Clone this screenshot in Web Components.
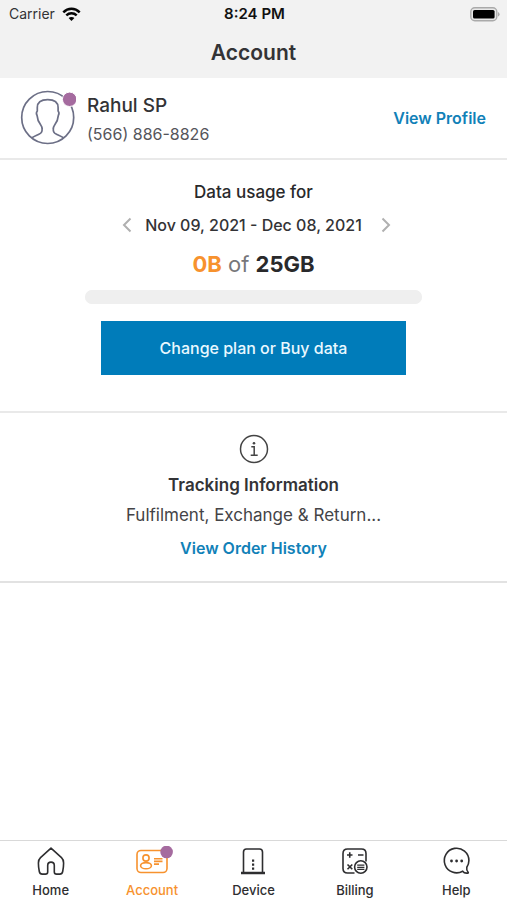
<!DOCTYPE html>
<html lang="en">
<head>
<meta charset="utf-8">
<meta name="viewport" content="width=device-width, initial-scale=1">
<title>Account</title>
<style>
  html, body { margin: 0; height: 100%; }
  body {
    --ink: #333336; --blue: #007cba; --link: #1181b8; --orange: #f7922e;
    --badge: #a56b9f; --bar: #f2f2f2; --line: #e2e2e2; --line-soft: #e9e9e9;
    font-family: Inter, "Liberation Sans", sans-serif;
    color: var(--ink); background: #fff;
  }
</style>
</head>
<body>
<account-app></account-app>
<script>
const define = (name, html) => {
  const template = document.createElement('template');
  template.innerHTML = html;
  customElements.define(name, class extends HTMLElement {
    constructor() {
      super();
      this.attachShadow({ mode: 'open' }).append(template.content.cloneNode(true));
    }
  });
};

define('status-bar', `
  <style>
    :host { display: grid; grid-template-columns: 1fr auto 1fr; align-items: center;
      height: 28px; padding: 0 7px 0 9px; background: var(--bar); font-size: 14px; line-height: 20px; }
    .left { display: flex; align-items: center; gap: 7px; }
    .time { font-size: 15px; font-weight: 600; color: #111; }
    .battery { justify-self: end; }
    svg { display: block; }
  </style>
  <span class="left">Carrier
    <svg width="19" height="15" viewBox="0 0 19 15" fill="none" stroke="#050505" stroke-width="2.5" aria-hidden="true">
      <path d="M1.3 5.3C6 .7 13 .7 17.7 5.3"/><path d="M4.3 8.4c3-2.8 7.4-2.8 10.4 0"/>
      <path d="M9.5 14 6.6 11.1c1.6-1.5 4.2-1.5 5.8 0z" fill="#050505" stroke="none"/>
    </svg></span>
  <span class="time">8:24 PM</span>
  <svg class="battery" width="30" height="15" viewBox="0 0 30 15" aria-hidden="true">
    <rect x=".8" y=".8" width="26" height="13" rx="4" fill="#e8e8e8" stroke="#aaa" stroke-width="1.4"/>
    <rect x="3" y="3" width="21.6" height="8.6" rx="1.6" fill="#000"/>
    <path d="M28 5v4.6q1.6-.7 1.6-2.3T28 5z" fill="#aaa"/>
  </svg>`);

define('title-bar', `
  <style>
    :host { display: block; background: var(--bar); }
    h1 { margin: 0; padding: 11px 0; text-align: center; font-size: 21px; line-height: 28px; font-weight: 600; }
  </style>
  <h1><slot></slot></h1>`);

define('profile-card', `
  <style>
    :host { display: flex; align-items: center; gap: 11px; padding: 12px 21px 12px 20px; border-bottom: 2px solid var(--line-soft); }
    svg { display: block; flex: none; }
    .who { flex: 1; display: grid; gap: 4px; padding-top: 4px; }
    .name { font-size: 19px; line-height: 24px; font-weight: 500; }
    .phone { font-size: 16px; line-height: 24px; color: #55555a; }
    a { color: var(--link); font-size: 16px; line-height: 24px; font-weight: 600; text-decoration: none; }
  </style>
  <svg width="56" height="56" viewBox="0 0 56 56" fill="none" stroke="#6c6f86" stroke-width="1.7" aria-hidden="true">
    <circle cx="27.7" cy="27.5" r="26"/>
    <path d="M12 47.800c1.500-1 4.200-2.200 7.300-3.700 2.200-1 3-2.500 2.800-5.200 0-1.500-.4-2.700-1.500-4.200-2-2.700-3.300-5.500-3.500-9.100-.8-1.500-.7-3.600.2-4.600V17.600c0-5.400 4-8 10.400-8s10.400 2.600 10.400 8v3.400c.9 1 1 3.100.2 4.600-.2 3.600-1.500 6.400-3.500 9.100-1.100 1.500-1.500 2.700-1.500 4.200-.2 2.700.6 4.200 2.800 5.200 3.100 1.500 5.800 2.700 7.300 3.700"/>
    <circle cx="49.600" cy="9.300" r="7.200" fill="#a56b9f" stroke="#fff" stroke-width="1"/>
  </svg>
  <span class="who"><span class="name"><slot></slot></span><span class="phone"><slot name="phone"></slot></span></span>
  <a href="#profile">View Profile</a>`);

define('data-usage', `
  <style>
    :host { display: flex; flex-direction: column; align-items: center; padding: 20px 0 36px; border-bottom: 2px solid var(--line-soft); }
    h2 { margin: 0; font-size: 17px; line-height: 24px; font-weight: 500; color: #29292b; }
    .period { display: flex; align-items: center; gap: 12px; margin-top: 9px; padding-left: 6px; font-size: 16px; line-height: 24px; font-weight: 500; }
    .period span { margin-right: 6px; }
    .period button { display: grid; place-items: center; width: 12px; height: 24px; padding: 0; border: 0; background: none; }
    .amount { margin: 11px 0 0; font-size: 22px; line-height: 32px; color: #77777a; }
    b { font-weight: 700; color: #29292b; }
    .used { color: var(--orange); }
    progress { appearance: none; display: block; width: 66.66%; height: 14px; margin-top: 10px; border: 0; border-radius: 7px; overflow: hidden; background: #efefef; }
    progress::-webkit-progress-bar { background: #efefef; border-radius: 7px; }
    progress::-webkit-progress-value { background: var(--orange); }
    .buy { width: 60%; height: 54px; margin-top: 17px; border: 0; background: var(--blue); color: #e9f8ff; font: 500 16px/24px Inter, "Liberation Sans", sans-serif; }
  </style>
  <h2>Data usage for</h2>
  <div class="period">
    <button type="button" aria-label="Previous period"><svg width="10" height="16" viewBox="0 0 10 16" fill="none" stroke="#b0b0b0" stroke-width="2"><path d="M8.500 1.500 2 8l6.500 6.500"/></svg></button>
    <span><slot></slot></span>
    <button type="button" aria-label="Next period"><svg width="10" height="16" viewBox="0 0 10 16" fill="none" stroke="#b0b0b0" stroke-width="2"><path d="M1.500 1.500 8 8l-6.500 6.500"/></svg></button>
  </div>
  <p class="amount"><b class="used">0B</b> of <b>25GB</b></p>
  <progress value="0" max="25" aria-label="Data used"></progress>
  <button class="buy" type="button">Change plan or Buy data</button>`);

define('order-tracking', `
  <style>
    :host { display: flex; flex-direction: column; align-items: center; padding: 21px 0; border-bottom: 2px solid var(--line); text-align: center; font-size: 17px; line-height: 24px; }
    svg { display: block; }
    h2 { margin: 9px 0 0; font-size: 17px; line-height: 24px; font-weight: 600; }
    p { margin: 6px 0 9px; color: #444447; }
    a { color: var(--link); font-size: 16px; font-weight: 600; text-decoration: none; }
  </style>
  <svg width="30" height="30" viewBox="0 0 30 30" fill="none" stroke="#444" stroke-width="1.500" aria-hidden="true">
    <circle cx="15" cy="15" r="13.500"/><path d="M12.300 12.700h2.900v8.600M11.700 21.300h7"/><circle cx="15" cy="9.200" r="1.300" fill="#444" stroke="none"/>
  </svg>
  <h2><slot name="heading"></slot></h2>
  <p><slot></slot></p>
  <a href="#orders">View Order History</a>`);

define('tab-item', `
  <style>
    :host { display: block; color: #2e2e30; }
    :host([current]) { color: var(--orange); }
    a { display: flex; flex-direction: column; align-items: center; gap: 4px; color: inherit; text-decoration: none; font-size: 13px; line-height: 20px; font-weight: 500; }
  </style>
  <a href="#tab"><slot name="icon"></slot><span><slot></slot></span></a>`);

define('tab-bar', `
  <style>
    :host { display: block; border-top: 1px solid #d9d9d9; }
    nav { display: grid; grid-template-columns: repeat(5, 1fr); padding-top: 5px; }
    svg { display: block; fill: none; stroke: currentColor; stroke-width: 1.6; stroke-linejoin: round; }
    .dot { fill: currentColor; stroke: none; }
  </style>
  <nav aria-label="Main">
    <tab-item><svg slot="icon" width="30" height="30" viewBox="0 0 30 30" aria-hidden="true">
      <path d="M15 2.200 4.500 11.700Q2.400 13.700 2.400 17c0 3 .4 6.300.9 8.500.4 1.800 1.200 2.600 2.900 2.600h3.200c1.500 0 2.300-.8 2.300-2.200v-6.500q0-3.300 3.300-3.300t3.300 3.300v6.500c0 1.400.8 2.200 2.300 2.200h3.200c1.700 0 2.500-.8 2.900-2.600.5-2.200.9-5.500.9-8.500q0-3.300-2.100-5.300z"/></svg>Home</tab-item>
    <tab-item current><svg slot="icon" width="44" height="30" viewBox="0 0 44 30" aria-hidden="true">
      <rect x="7" y="4.500" width="30" height="22" rx="4"/>
      <circle cx="16" cy="12" r="3.100"/><ellipse cx="16" cy="19.700" rx="5.400" ry="3.100"/>
      <path d="M24 12.700h8.500M24 15.400h8.500M24 18.100h5"/>
      <circle cx="36.600" cy="6" r="6.300" fill="#a56b9f" stroke="none"/></svg>Account</tab-item>
    <tab-item><svg slot="icon" width="30" height="30" viewBox="0 0 30 30" aria-hidden="true">
      <path d="M5.500 26.300V6q0-3 3-3h13q3 0 3 3v20.300"/><path d="M3 27h24" stroke-width="2.500"/>
      <path class="dot" d="M14 13.500h2.200v2.200H14zM14 17.500h2.200v2.200H14zM14 21.500h2.200v2.200H14z"/></svg>Device</tab-item>
    <tab-item><svg slot="icon" width="30" height="30" viewBox="0 0 30 30" aria-hidden="true">
      <path d="M14.500 27H7.500q-4.500 0-4.500-4.500v-15Q3 3 7.500 3h14Q26 3 26 7.500v8"/>
      <path d="M7 9h5.500M9.750 6.300v5.500M18 9h5.500M7.500 18.500l4.800 4.800M12.300 18.500l-4.800 4.800"/>
      <circle cx="20.800" cy="21" r="6.200"/><path d="M17.200 19.200h7.200M17.200 21.300h7.200M17.200 23.400h7.200" stroke-width="1.300"/></svg>Billing</tab-item>
    <tab-item><svg slot="icon" width="30" height="30" viewBox="0 0 30 30" aria-hidden="true">
      <path d="M25.800 21.300q2.100-3.200 2.100-6.800a12.300 12.300 0 1 0-6.200 10.700c1 1.500 2.700 2.200 4.900 1.900.8-.1.900-.6.400-1.100q-1.700-1.600-1.200-4.700z"/>
      <circle class="dot" cx="10.500" cy="15" r="1.400"/><circle class="dot" cx="15.600" cy="15" r="1.400"/><circle class="dot" cx="20.700" cy="15" r="1.400"/></svg>Help</tab-item>
  </nav>`);

define('account-app', `
  <style>
    :host { display: flex; flex-direction: column; min-height: 100vh; }
    main { flex: 1; }
  </style>
  <header><status-bar></status-bar><title-bar>Account</title-bar></header>
  <main>
    <profile-card>Rahul SP<span slot="phone">(566) 886-8826</span></profile-card>
    <data-usage>Nov 09, 2021 - Dec 08, 2021</data-usage>
    <order-tracking><span slot="heading">Tracking Information</span>Fulfilment, Exchange &amp; Return...</order-tracking>
  </main>
  <tab-bar></tab-bar>`);
</script>
</body>
</html>
